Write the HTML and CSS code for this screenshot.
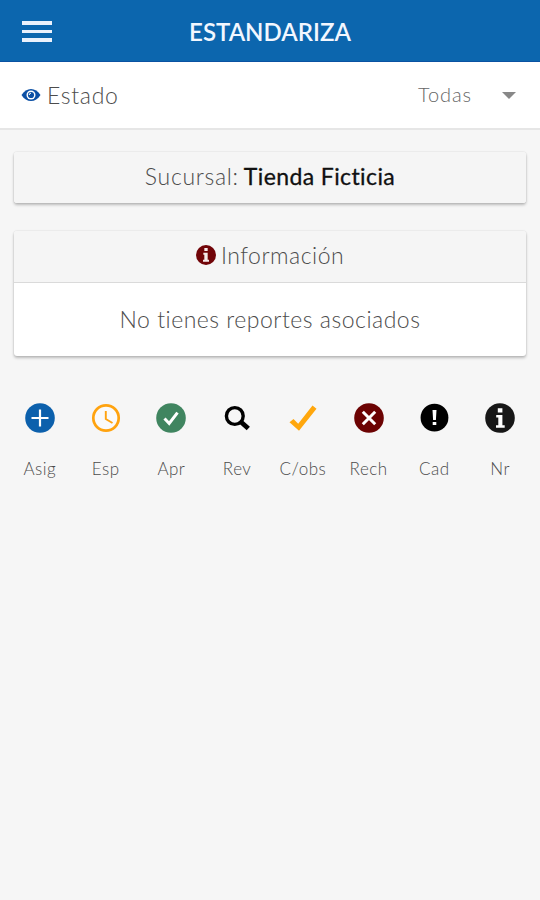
FILE: index.html
```html
<!DOCTYPE html>
<html lang="es">

<head>
    <meta charset="UTF-8">
    <meta name="viewport" content="width=device-width, initial-scale=1.0">
    <title>Estandariza</title>
    <link rel="stylesheet" href="styles.css">
</head>

<body>
    <header class="navbar">
        <button class="menu-button" aria-label="Menú">
            <span></span>
            <span></span>
            <span></span>
        </button>
        <h1 class="title">ESTANDARIZA</h1>
    </header>

    <div class="filter">
        <div class="filter-label">
            <svg class="eye" viewBox="0 0 20 14">
                <path d="M0.5 7C3 3 6.300 1 10 1s7 2 9.500 6c-2.500 4-5.800 6-9.500 6S3 11 0.500 7z" fill="#0c50a5" />
                <circle cx="10" cy="7" r="4.500" fill="#fff" />
                <circle cx="10" cy="7" r="3.100" fill="#0c50a5" />
                <path d="M8.200 7A1.800 1.800 0 0 1 10 5.200" fill="none" stroke="#fff" stroke-width="1" />
            </svg>
            <span class="estado">Estado</span>
        </div>
        <div class="select">
            <span class="todas">Todas</span>
            <span class="arrow"></span>
        </div>
    </div>

    <main class="content">
        <div class="card">
            <div class="card-header">
                <span class="sucursal">Sucursal:</span>
                <strong class="tienda">Tienda Ficticia</strong>
            </div>
        </div>

        <div class="card">
            <div class="card-header bordered">
                <svg class="info-icon" viewBox="0 0 30 30">
                    <circle cx="15" cy="15" r="15" fill="#710408" />
                    <path d="M12.500 4.500h5v4.500h-5zM11 11.500h6.500v10.500h2v3h-9v-3h2v-7.500H11z" fill="#f5e9e9" />
                </svg>
                <span class="informacion">Información</span>
            </div>
            <div class="card-body">
                <span class="mensaje">No tienes reportes asociados</span>
            </div>
        </div>
    </main>

    <!-- Leyenda de estados -->
    <div class="legend">
        <div class="legend-item">
            <svg viewBox="0 0 30 30">
                <circle cx="15" cy="15" r="14.800" fill="#0c60ac" />
                <path d="M15 6.500v17M6.500 15h17" stroke="#fff" stroke-width="2.200" />
            </svg>
            <span>Asig</span>
        </div>
        <div class="legend-item">
            <svg viewBox="0 0 30 30">
                <circle cx="15" cy="15" r="12.700" fill="#fafafa" stroke="#ffa30f" stroke-width="2.700" />
                <path d="M14.800 8v8l6.700 4" fill="none" stroke="#ffa30f" stroke-width="1.900" />
            </svg>
            <span>Esp</span>
        </div>
        <div class="legend-item">
            <svg viewBox="0 0 30 30">
                <circle cx="15" cy="15" r="14.800" fill="#408560" />
                <path d="M8.500 15.500l4.700 5 8.300-10.800" fill="none" stroke="#fff" stroke-width="3" />
            </svg>
            <span>Apr</span>
        </div>
        <div class="legend-item">
            <svg viewBox="0 0 30 30">
                <circle cx="12.800" cy="13" r="8.400" fill="none" stroke="#000" stroke-width="3.400" />
                <path d="M19 19l7.300 6.500" stroke="#000" stroke-width="4.800" />
            </svg>
            <span>Rev</span>
        </div>
        <div class="legend-item">
            <svg viewBox="0 0 30 30">
                <path d="M1.500 19.200l4-3.200 4.700 4.800L24.500 2.500l4 3.200L11 27.800z" fill="#ffa70d" />
            </svg>
            <span>C/obs</span>
        </div>
        <div class="legend-item">
            <svg viewBox="0 0 30 30">
                <circle cx="15" cy="15" r="14.800" fill="#6c0303" />
                <path d="M8.800 8.800l12.400 12.400M21.200 8.800L8.800 21.200" stroke="#fff" stroke-width="3" />
            </svg>
            <span>Rech</span>
        </div>
        <div class="legend-item">
            <svg viewBox="0 0 30 30">
                <circle cx="15.500" cy="14.700" r="13.900" fill="#000" />
                <path d="M13.500 7h4l-.6 10h-2.800zM13.700 19h3.600v3h-3.600z" fill="#fff" />
            </svg>
            <span>Cad</span>
        </div>
        <div class="legend-item">
            <svg viewBox="0 0 30 30">
                <circle cx="15" cy="15" r="14.800" fill="#171717" />
                <path d="M12.800 5.200h4.600v4.300h-4.600zM11.200 12h6.200v10.200h2.300v2.600h-8.700v-2.600h2.300v-7.600h-2.100z" fill="#fff" />
            </svg>
            <span>Nr</span>
        </div>
    </div>
</body>

</html>
```
FILE: styles.css
```css
body {
    margin: 0;
    min-height: 100vh;
    background-color: #f6f6f6;
    color: #4c4c4c;
    font-family: Lato, "Open Sans", sans-serif;
    font-weight: 300;
    font-variant-ligatures: none;
}

.navbar {
    display: grid;
    grid-template-columns: 74px 1fr 74px;
    align-items: center;
    height: 62px;
    box-sizing: border-box;
    background-color: #0c66ae;
    border-bottom: 1px solid #0a52a2;
}

.menu-button {
    display: flex;
    flex-direction: column;
    gap: 5px;
    width: 30px;
    margin: 2px 0 0 22px;
    padding: 0;
    border: none;
    background: none;
}

.menu-button span {
    height: 3.500px;
    background-color: #ebf1fc;
}

.title {
    margin: 2px 0 0;
    color: #f2f7ff;
    font-size: 24px;
    font-weight: 600;
    letter-spacing: 0;
    text-align: center;
}

.filter {
    display: flex;
    justify-content: space-between;
    align-items: center;
    height: 68px;
    box-sizing: border-box;
    padding: 0 24px 0 21px;
    background-color: #fff;
    border-bottom: 2px solid #e6e6e6;
}

.filter-label {
    display: flex;
    align-items: center;
    gap: 6px;
    font-size: 23px;
}

.estado {
    letter-spacing: 0.7px;
}

.eye {
    width: 20px;
    height: 14px;
}

.select {
    display: flex;
    align-items: center;
    gap: 30px;
    color: #666;
    font-size: 20px;
}

.todas {
    margin-bottom: 2px;
    letter-spacing: 0.9px;
}

.arrow {
    border-left: 7px solid transparent;
    border-right: 7px solid transparent;
    border-top: 7px solid #888;
}

.content {
    display: flex;
    flex-direction: column;
    gap: 28px;
    padding: 22px 14px 0;
}

.card {
    background-color: #fff;
    border-radius: 3px;
    box-shadow: 0 2px 3px rgba(0, 0, 0, 0.24), 0 0 2px rgba(0, 0, 0, 0.14);
    font-size: 23px;
}

.card-header {
    display: flex;
    justify-content: center;
    align-items: center;
    gap: 5px;
    height: 51px;
    box-sizing: border-box;
    padding-bottom: 3px;
    background-color: #f5f5f5;
    border-radius: 3px;
}

.bordered {
    height: 52px;
    border-bottom: 1px solid #dadada;
    border-radius: 3px 3px 0 0;
}

.sucursal {
    letter-spacing: 0.7px;
}

.tienda {
    color: #111;
    font-weight: 400;
    letter-spacing: 0.4px;
    -webkit-text-stroke: 0.3px #111;
}

.informacion {
    letter-spacing: 0.5px;
}

.mensaje {
    letter-spacing: 0.5px;
}

.info-icon {
    width: 20px;
    height: 20px;
}

.card-body {
    display: flex;
    justify-content: center;
    align-items: center;
    height: 73px;
    box-sizing: border-box;
    padding-bottom: 2px;
}

.legend {
    display: grid;
    grid-template-columns: repeat(8, 1fr);
    margin-top: 47px;
    padding: 0 7px;
}

.legend-item {
    display: flex;
    flex-direction: column;
    align-items: center;
    gap: 25px;
    font-size: 17px;
    line-height: 22px;
    letter-spacing: 0.5px;
}

.legend-item svg {
    width: 30px;
    height: 30px;
}
```
